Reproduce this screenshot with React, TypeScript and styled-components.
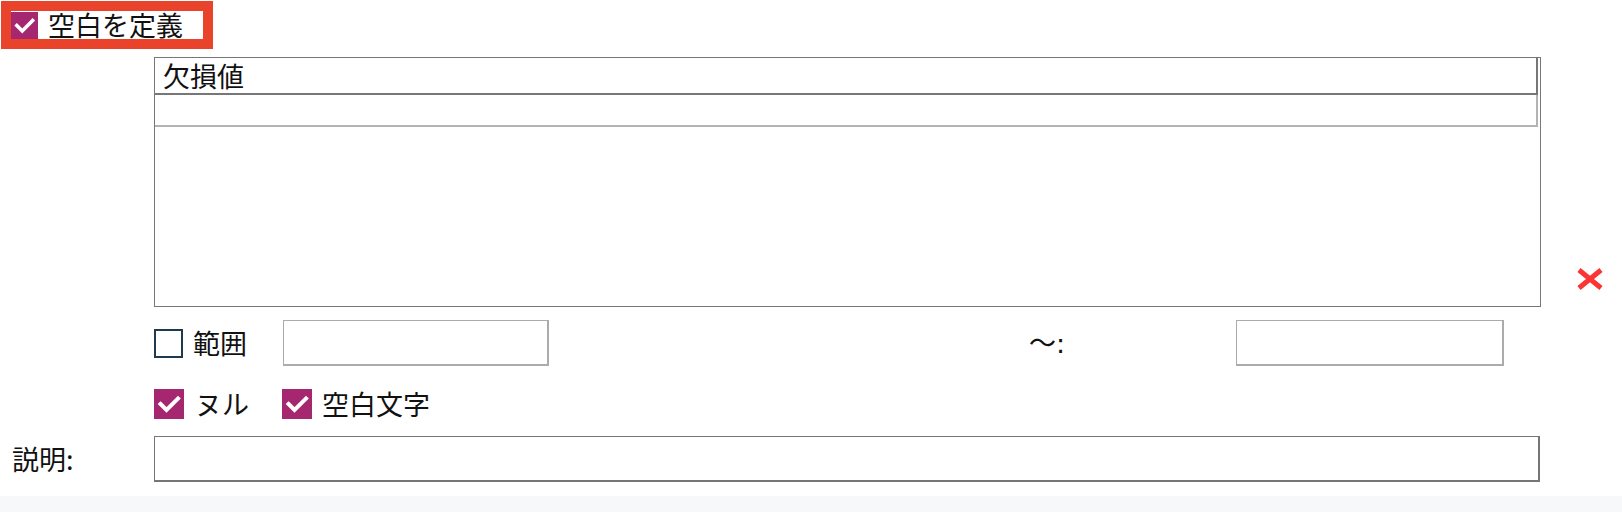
import React from "react";
import styled, { createGlobalStyle } from "styled-components";

const Global = createGlobalStyle`
  html, body { margin: 0; padding: 0; background: #fff; }
  body { font-family: "Noto Sans CJK JP", "Noto Sans", sans-serif; color: #111; }
  * { box-sizing: border-box; }
`;

const Page = styled.div`
  width: 1622px;
  height: 512px;
  display: flex;
  flex-direction: column;
  background: #fff;
  overflow: hidden;
`;

const Header = styled.label`
  margin: 11px 0 0 11px;
  width: 192px;
  height: 28px;
  display: flex;
  align-items: center;
  gap: 10px;
  outline: 10px solid #e9432b;
  background: #fff;
  font-size: 27px;
  line-height: 28px;
`;

const Box = styled.span<{ $size: number; $checked?: boolean }>`
  flex: none;
  width: ${(p) => p.$size}px;
  height: ${(p) => p.$size}px;
  display: inline-flex;
  align-items: center;
  justify-content: center;
  background: ${(p) => (p.$checked ? "#a5276f" : "#fff")};
  border: ${(p) => (p.$checked ? "none" : "2px solid #1f3a4e")};
`;

const Check = ({ size, checked }: { size: number; checked?: boolean }) => (
  <Box $size={size} $checked={checked}>
    {checked && (
      <svg width={size} height={size} viewBox="0 0 30 30">
        <path d="M6.5 15 L12.5 21 L24 9.5" fill="none" stroke="#fff" strokeWidth="4" strokeLinecap="square" />
      </svg>
    )}
  </Box>
);

const ListRow = styled.div`
  margin-top: 18px;
  display: flex;
  align-items: flex-end;
  padding-left: 154px;
`;

const ListBox = styled.div`
  width: 1387px;
  height: 250px;
  border: 1px solid #777;
  padding-right: 2px;
  background: #fff;
`;

const ListHead = styled.div`
  height: 37px;
  border-right: 2px solid #777;
  border-bottom: 2px solid #777;
  padding-left: 8px;
  font-size: 27px;
  line-height: 36px;
`;

const ListItem = styled.div`
  height: 32px;
  border-right: 2px solid #b3b3b3;
  border-bottom: 2px solid #b3b3b3;
`;

const Remove = styled.span`
  margin: 0 0 16px 35px;
  display: inline-flex;
  width: 28px;
  height: 24px;
`;

const RangeRow = styled.div`
  margin-top: 13px;
  padding-left: 154px;
  display: grid;
  grid-template-columns: 129px 266px 480px 207px 268px;
  align-items: center;
  height: 46px;
`;

const Option = styled.label<{ $gap: number }>`
  display: flex;
  align-items: center;
  gap: ${(p) => p.$gap}px;
  font-size: 27px;
  line-height: 30px;
`;

const Field = styled.div<{ $dark?: boolean }>`
  height: 46px;
  background: #fff;
  border-style: solid;
  border-color: ${(p) => (p.$dark ? "#767676" : "#ababab")};
  border-width: 1px 2px 2px 1px;
`;

const Tilde = styled.span`
  font-size: 27px;
  line-height: 30px;
  font-family: "DejaVu Sans", "Noto Sans CJK JP", sans-serif;
  padding-top: 2px;
`;

const ChecksRow = styled.div`
  margin-top: 22px;
  padding-left: 154px;
  display: flex;
  align-items: center;
  gap: 33px;
  height: 31px;
`;

const DescRow = styled.div`
  margin-top: 17px;
  display: grid;
  grid-template-columns: 154px 1386px;
  align-items: center;
`;

const DescLabel = styled.span`
  padding-left: 12px;
  font-size: 27px;
  line-height: 30px;
`;

const Band = styled.div`
  margin-top: 14px;
  height: 16px;
  background: #f7f8fa;
`;

export default function App() {
  return (
    <Page>
      <Global />
      <Header>
        <Check size={27} checked />
        <span>空白を定義</span>
      </Header>
      <ListRow>
        <ListBox>
          <ListHead>欠損値</ListHead>
          <ListItem />
        </ListBox>
        <Remove>
          <svg width="28" height="24" viewBox="0 0 28 24">
            <path d="M3 3 L25 21 M25 3 L3 21" stroke="#fb3535" strokeWidth="5" strokeLinecap="butt" fill="none" />
          </svg>
        </Remove>
      </ListRow>
      <RangeRow>
        <Option $gap={10}>
          <Check size={29} />
          <span>範囲</span>
        </Option>
        <Field />
        <span />
        <Tilde>〜:</Tilde>
        <Field />
      </RangeRow>
      <ChecksRow>
        <Option $gap={11}>
          <Check size={30} checked />
          <span>ヌル</span>
        </Option>
        <Option $gap={10}>
          <Check size={30} checked />
          <span>空白文字</span>
        </Option>
      </ChecksRow>
      <DescRow>
        <DescLabel>説明:</DescLabel>
        <Field $dark />
      </DescRow>
      <Band />
    </Page>
  );
}
